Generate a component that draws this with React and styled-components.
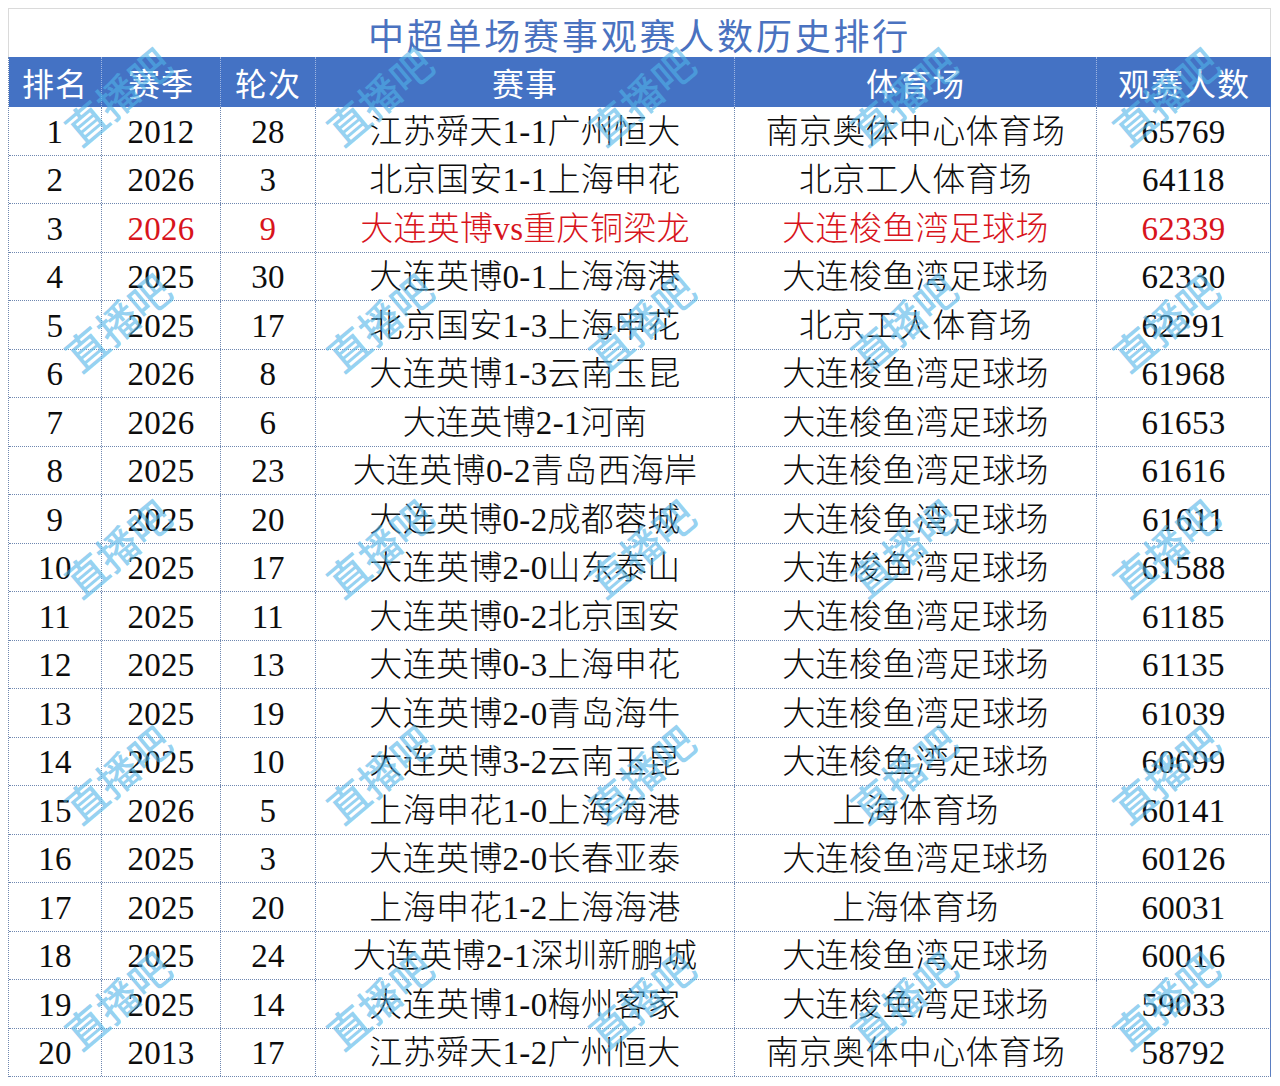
import styled, { createGlobalStyle } from "styled-components";

// 数据
const columns = ["排名", "赛季", "轮次", "赛事", "体育场", "观赛人数"];

const rows = [
  [1, 2012, 28, "江苏舜天1-1广州恒大", "南京奥体中心体育场", 65769],
  [2, 2026, 3, "北京国安1-1上海申花", "北京工人体育场", 64118],
  [3, 2026, 9, "大连英博vs重庆铜梁龙", "大连梭鱼湾足球场", 62339, true],
  [4, 2025, 30, "大连英博0-1上海海港", "大连梭鱼湾足球场", 62330],
  [5, 2025, 17, "北京国安1-3上海申花", "北京工人体育场", 62291],
  [6, 2026, 8, "大连英博1-3云南玉昆", "大连梭鱼湾足球场", 61968],
  [7, 2026, 6, "大连英博2-1河南", "大连梭鱼湾足球场", 61653],
  [8, 2025, 23, "大连英博0-2青岛西海岸", "大连梭鱼湾足球场", 61616],
  [9, 2025, 20, "大连英博0-2成都蓉城", "大连梭鱼湾足球场", 61611],
  [10, 2025, 17, "大连英博2-0山东泰山", "大连梭鱼湾足球场", 61588],
  [11, 2025, 11, "大连英博0-2北京国安", "大连梭鱼湾足球场", 61185],
  [12, 2025, 13, "大连英博0-3上海申花", "大连梭鱼湾足球场", 61135],
  [13, 2025, 19, "大连英博2-0青岛海牛", "大连梭鱼湾足球场", 61039],
  [14, 2025, 10, "大连英博3-2云南玉昆", "大连梭鱼湾足球场", 60699],
  [15, 2026, 5, "上海申花1-0上海海港", "上海体育场", 60141],
  [16, 2025, 3, "大连英博2-0长春亚泰", "大连梭鱼湾足球场", 60126],
  [17, 2025, 20, "上海申花1-2上海海港", "上海体育场", 60031],
  [18, 2025, 24, "大连英博2-1深圳新鹏城", "大连梭鱼湾足球场", 60016],
  [19, 2025, 14, "大连英博1-0梅州客家", "大连梭鱼湾足球场", 59033],
  [20, 2013, 17, "江苏舜天1-2广州恒大", "南京奥体中心体育场", 58792],
];

export default function App() {
  return (
    <>
      <GlobalStyle />
      <Page>
        <Sheet>
          <TitleRow>中超单场赛事观赛人数历史排行</TitleRow>
          <Table>
            <HeaderRow>
              {columns.map((c) => (
                <HeaderCell key={c}>{c}</HeaderCell>
              ))}
            </HeaderRow>
            {rows.map(([rank, season, round, match, stadium, count, hot]) => (
              <Row key={rank}>
                <Cell>{rank}</Cell>
                <Cell $hot={hot}>{season}</Cell>
                <Cell $hot={hot}>{round}</Cell>
                <Cell $hot={hot}>{match}</Cell>
                <Cell $hot={hot}>{stadium}</Cell>
                <Cell $hot={hot} $last>
                  {count}
                </Cell>
              </Row>
            ))}
          </Table>
          <Watermarks>
            {Array.from({ length: 25 }).map((_, i) => (
              <Mark key={i}>
                <MarkText>直播吧</MarkText>
              </Mark>
            ))}
          </Watermarks>
        </Sheet>
      </Page>
    </>
  );
}

const GlobalStyle = createGlobalStyle`
  body {
    margin: 0;
    background: #fff;
  }
`;

const Page = styled.div`
  padding: 8px;
  background: #fff;
`;

const Sheet = styled.div`
  position: relative;
  width: 1263px;
  overflow: hidden;
  font-family: "Liberation Serif", "Noto Sans CJK SC", serif;
`;

const TitleRow = styled.div`
  height: 49px;
  box-sizing: border-box;
  border: 1px solid #dadada;
  border-bottom: none;
  display: flex;
  align-items: center;
  justify-content: center;
  padding-top: 2px;
  color: #4a72c0;
  font-family: "Noto Sans CJK SC", sans-serif;
  font-size: 36px;
  letter-spacing: 2.8px;
  line-height: 1;
`;

const Table = styled.div`
  border-left: 1px dotted #6f87b0;
`;

const grid = `
  display: grid;
  grid-template-columns: 93px 119px 95px 419px 362px 175px;
`;

const HeaderRow = styled.div`
  ${grid}
  height: 50px;
  background: #4472c4;
`;

const HeaderCell = styled.div`
  display: flex;
  align-items: center;
  justify-content: center;
  color: #fff;
  font-family: "Noto Sans CJK SC", sans-serif;
  font-size: 32px;
  letter-spacing: 1px;
  border-right: 1px dotted #9fb6e2;

  &:last-child {
    border-right: 1px solid #4d74bd;
  }
`;

const Row = styled.div`
  ${grid}
  height: 48.5px;
  box-sizing: border-box;
  border-bottom: 1px dotted #6f87b0;
`;

const Cell = styled.div`
  display: flex;
  align-items: center;
  justify-content: center;
  padding-top: 3px;
  font-size: 33px;
  font-weight: 300;
  letter-spacing: 0.3px;
  line-height: 1;
  color: ${({ $hot }) => ($hot ? "#d8141c" : "#0d0d0d")};
  border-right: ${({ $last }) =>
    $last ? "2px solid #5b7ec2" : "1px dotted #6f87b0"};
  white-space: nowrap;
`;

const Watermarks = styled.div`
  position: absolute;
  left: -23px;
  top: -26px;
  display: grid;
  grid-template-columns: repeat(5, 262px);
  grid-template-rows: repeat(5, 226px);
  pointer-events: none;
`;

const Mark = styled.div`
  display: flex;
  align-items: center;
  justify-content: center;
`;

const MarkText = styled.span`
  font-family: "Noto Sans CJK SC", sans-serif;
  font-size: 41px;
  font-weight: 500;
  color: rgba(80, 180, 232, 0.62);
  transform: rotate(-40deg);
  white-space: nowrap;
`;
